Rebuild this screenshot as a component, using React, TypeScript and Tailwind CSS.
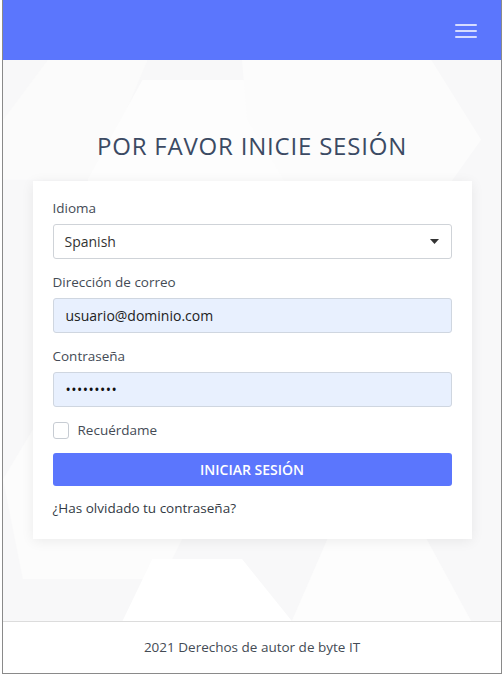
import React from "react";

const font = { fontFamily: '"Open Sans", "Liberation Sans", sans-serif' };

function Backdrop() {
  return (
    <svg
      className="absolute inset-0 w-full h-full"
      viewBox="0 0 500 562"
      preserveAspectRatio="none"
      aria-hidden
    >
      <rect width="500" height="562" fill="#f8f8f9" />
      <polygon points="45,0 145,0 95,120 0,120 0,60" fill="#fbfbfb" />
      <polygon points="140,20 245,20 300,120 250,230 140,230 85,120" fill="#fdfdfd" />
      <polygon points="240,0 430,0 480,80 430,150 300,150 245,60" fill="#fcfcfc" />
      <polygon points="0,420 60,320 160,320 210,420 160,520 20,520" fill="#fcfcfc" />
      <polygon points="150,500 240,500 290,562 120,562" fill="#ffffff" />
      <polygon points="330,470 420,470 470,562 290,562" fill="#fdfdfd" />
    </svg>
  );
}

export default function App() {
  return (
    <div className="w-[504px] h-[675px] bg-white overflow-hidden" style={font}>
      <div className="ml-[2px] w-[500px] h-[674px] border-l border-r border-b border-[#8a8a8a] flex flex-col">
        <header className="h-[60px] bg-[#5b76fd] flex items-center justify-end pr-[24px] shrink-0">
          <div className="w-[22px] flex flex-col gap-[4px] mt-[1px]">
            <span className="block h-[2px] bg-white/75 rounded" />
            <span className="block h-[2px] bg-white/75 rounded" />
            <span className="block h-[2px] bg-white/75 rounded" />
          </div>
        </header>

        <main className="relative flex-1">
          <Backdrop />
          <div className="relative flex flex-col items-center pt-[70px]">
            <h1 className="text-[24px] leading-[32px] tracking-[0.8px] text-[#3b4a63] font-normal">
              POR FAVOR INICIE SESIÓN
            </h1>

            <div className="mt-[19px] w-[439px] bg-white shadow-[0_2px_12px_rgba(0,0,0,0.07)] px-[20px] pt-[18px] pb-[20px]">
              <label className="block text-[13.5px] leading-[18px] text-[#444b55]">Idioma</label>
              <div className="mt-[7px] h-[35px] border border-[#cfd3d8] rounded-[3px] flex items-center justify-between pl-[11px] pr-[12px] text-[14px] text-[#333]">
                <span>Spanish</span>
                <svg width="9" height="5" viewBox="0 0 9 5">
                  <polygon points="0,0 9,0 4.5,5" fill="#333" />
                </svg>
              </div>

              <label className="block mt-[14px] text-[13.5px] leading-[18px] text-[#444b55]">
                Dirección de correo
              </label>
              <div className="mt-[7px] h-[35px] border border-[#cfd6e0] rounded-[3px] bg-[#e8f0fe] flex items-center pl-[12px] text-[14px] text-[#222]">
                usuario@dominio.com
              </div>

              <label className="block mt-[14px] text-[13.5px] leading-[18px] text-[#444b55]">Contraseña</label>
              <div className="mt-[7px] h-[35px] border border-[#cfd6e0] rounded-[3px] bg-[#e8f0fe] flex items-center pl-[12px] text-[14px] tracking-[0.5px] text-[#111]">
                •••••••••
              </div>

              <div className="mt-[13px] flex items-center gap-[9px]">
                <span className="w-[16px] h-[17px] border border-[#c7ccd3] rounded-[3px] bg-white" />
                <span className="text-[13.5px] text-[#444b55]">Recuérdame</span>
              </div>

              <button className="mt-[13px] w-full h-[33px] rounded-[3px] bg-[#5b76fd] text-white text-[14px] font-semibold">
                INICIAR SESIÓN
              </button>

              <p className="mt-[12px] text-[13.5px] text-[#333a44]">¿Has olvidado tu contraseña?</p>
            </div>
          </div>
        </main>

        <footer className="h-[52px] shrink-0 border-t border-[#dcdcdc] bg-white flex items-center justify-center text-[13.5px] text-[#444b55]">
          2021 Derechos de autor de byte IT
        </footer>
      </div>
    </div>
  );
}
